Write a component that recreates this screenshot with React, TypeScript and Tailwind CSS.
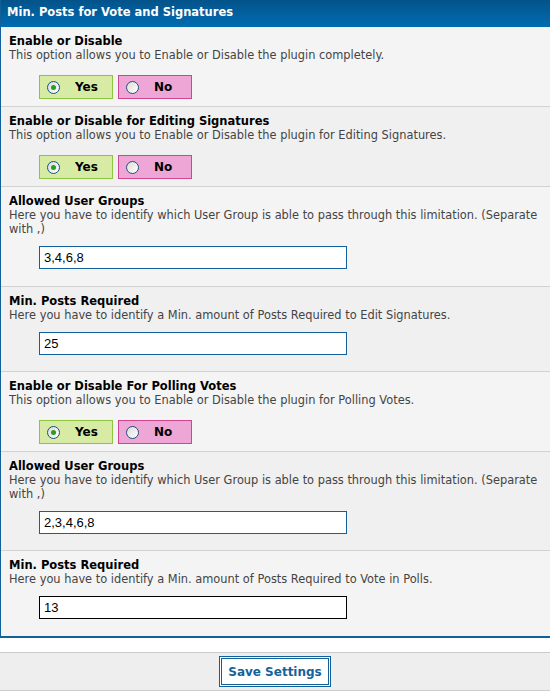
import React from "react"

type Row =
  | { kind: "toggle"; title: string; desc: string; value: boolean }
  | { kind: "text"; title: string; desc: string; value: string; focused?: boolean; tall?: boolean }

const rows: Row[] = [
  { kind: "toggle", title: "Enable or Disable", desc: "This option allows you to Enable or Disable the plugin completely.", value: true },
  { kind: "toggle", title: "Enable or Disable for Editing Signatures", desc: "This option allows you to Enable or Disable the plugin for Editing Signatures.", value: true },
  { kind: "text", title: "Allowed User Groups", desc: "Here you have to identify which User Group is able to pass through this limitation. (Separate with ,)", value: "3,4,6,8", tall: true },
  { kind: "text", title: "Min. Posts Required", desc: "Here you have to identify a Min. amount of Posts Required to Edit Signatures.", value: "25" },
  { kind: "toggle", title: "Enable or Disable For Polling Votes", desc: "This option allows you to Enable or Disable the plugin for Polling Votes.", value: true },
  { kind: "text", title: "Allowed User Groups", desc: "Here you have to identify which User Group is able to pass through this limitation. (Separate with ,)", value: "2,3,4,6,8" },
  { kind: "text", title: "Min. Posts Required", desc: "Here you have to identify a Min. amount of Posts Required to Vote in Polls.", value: "13", focused: true, tall: true },
]

function Radio({ checked }: { checked: boolean }) {
  return (
    <span className="flex h-[13px] w-[13px] items-center justify-center rounded-full border border-[#1c5180] bg-gradient-to-br from-[#dcdcd6] to-white">
      {checked && <span className="h-[5px] w-[5px] rounded-full bg-[#21a121]" />}
    </span>
  )
}

function Toggle({ value }: { value: boolean }) {
  return (
    <div className="flex gap-[5px] pl-[30px] pt-[13px]">
      <label className="flex h-[24px] w-[74px] items-center gap-[15px] border border-[#8cc63f] bg-[#d7eba5] pl-[7px] text-[12px] font-bold text-black">
        <Radio checked={value} />
        Yes
      </label>
      <label className="flex h-[24px] w-[74px] items-center gap-[15px] border border-[#cf4590] bg-[#eda6d5] pl-[7px] text-[12px] font-bold text-black">
        <Radio checked={!value} />
        No
      </label>
    </div>
  )
}

export default function App() {
  return (
    <div className="min-h-[692px] w-[550px] overflow-hidden bg-white font-['DejaVu_Sans',Verdana,sans-serif]">
      <div className="w-[560px] border-b-2 border-l border-[#11609a]">
        <div className="h-[27px] bg-gradient-to-b from-[#03538a] to-[#006db1] pl-[6px] pt-[5px] text-[11.5px] font-bold leading-[15px] text-white">
          Min. Posts for Vote and Signatures
        </div>
        {rows.map((row, i) => (
          <div
            key={i}
            className={`border-[#d2d2d2] pl-[8px] pr-[6px] pt-[7px] ${row.kind === "toggle" ? "pb-[7px]" : row.tall ? "pb-[17px]" : "pb-[16px]"} ${i > 0 ? "border-t" : ""} ${i % 2 === 0 ? "bg-[#f4f4f4]" : "bg-[#f0f0f0]"}`}
          >
            <div className="text-[11.5px] font-bold leading-[14px] text-black">{row.title}</div>
            <div className="w-[541px] text-[11.4px] leading-[14px] text-[#444]">{row.desc}</div>
            {row.kind === "toggle" ? (
              <Toggle value={row.value} />
            ) : (
              <div className="pl-[30px] pt-[9px]">
                <input
                  readOnly
                  value={row.value}
                  className={`h-[23px] w-[308px] border bg-white px-[4px] font-['Liberation_Sans',Arial,sans-serif] text-[13px] text-black outline-none ${row.focused ? "border-black" : "border-[#14609b]"}`}
                />
              </div>
            )}
          </div>
        ))}
      </div>
      <div className="mt-[14px] flex h-[39px] items-center justify-center border-y border-[#cccccc] bg-[#eeeeee]">
        <button className="h-[31px] w-[112px] border-[3px] border-double border-[#11609a] bg-white text-[12px] font-bold text-[#15629b]">
          Save Settings
        </button>
      </div>
    </div>
  )
}
